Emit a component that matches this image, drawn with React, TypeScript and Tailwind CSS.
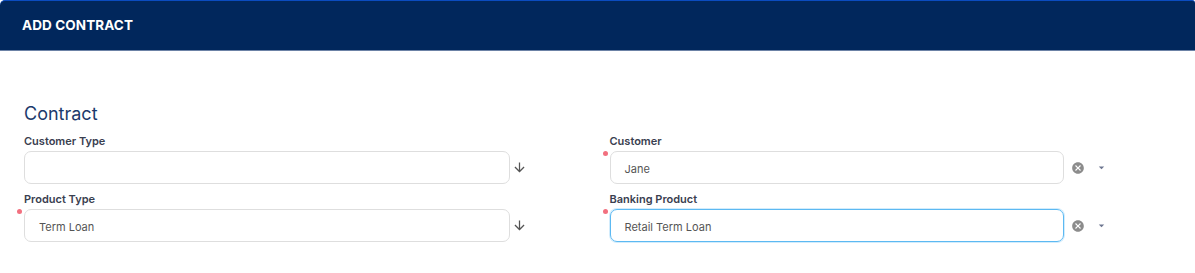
import React from "react";
import { MdArrowDownward, MdCancel, MdArrowDropDown } from "react-icons/md";

function Field({
  label,
  value,
  required,
  focused,
  kind,
}: {
  label: string;
  value?: string;
  required?: boolean;
  focused?: boolean;
  kind: "arrow" | "select";
}) {
  return (
    <div className="flex flex-col">
      <div className="text-[11px] leading-[14px] font-semibold text-[#3a4050] mb-[3px]">{label}</div>
      <div className="flex items-center">
        <div className={`relative ${kind === "arrow" ? "w-[486px]" : "w-[454px]"}`}>
          {required && (
            <span className="absolute left-[-7px] top-[0px] w-[5px] h-[5px] rounded-full bg-[#f2707f]" />
          )}
          <div
            className={`h-[33px] rounded-[7px] border flex items-center pl-[14px] pt-[3px] text-[11px] text-[#555] ${
              focused
                ? "border-[#5cb9f2] shadow-[0_0_0_1px_#d2ecfc]"
                : "border-[#dedede]"
            }`}
          >
            {value}
          </div>
        </div>
        {kind === "arrow" ? (
          <div className="ml-[2px] flex items-center text-[#555]">
            <MdArrowDownward size={15} />
          </div>
        ) : (
          <div className="flex items-center">
            <MdCancel size={14} className="ml-[7px] text-[#8c8c8c]" />
            <MdArrowDropDown size={13} className="ml-[10px] text-[#6d7690]" />
          </div>
        )}
      </div>
    </div>
  );
}

export default function App() {
  return (
    <div
      className="w-[1195px] h-[273px] bg-white overflow-hidden"
      style={{ fontFamily: "Inter, 'Noto Sans', sans-serif" }}
    >
      <div className="h-[50px] bg-[#01275c] border-t border-[#0b4cc0] rounded-tl-[5px] rounded-tr-[3px] flex items-center px-[22px]">
        <span className="text-white font-bold text-[13.5px] tracking-[0.1px]">ADD CONTRACT</span>
      </div>
      <div className="h-[1px] bg-[#6c82a6]" />
      <div className="px-6 pt-[51px]">
        <div className="text-[18px] leading-[24px] text-[#1c3a6c] mb-[8px]">Contract</div>
        <div className="grid grid-cols-2 gap-x-6 gap-y-[8px]">
          <Field label="Customer Type" kind="arrow" />
          <Field label="Customer" value="Jane" required kind="select" />
          <Field label="Product Type" value="Term Loan" required kind="arrow" />
          <Field label="Banking Product" value="Retail Term Loan" required focused kind="select" />
        </div>
      </div>
    </div>
  );
}
